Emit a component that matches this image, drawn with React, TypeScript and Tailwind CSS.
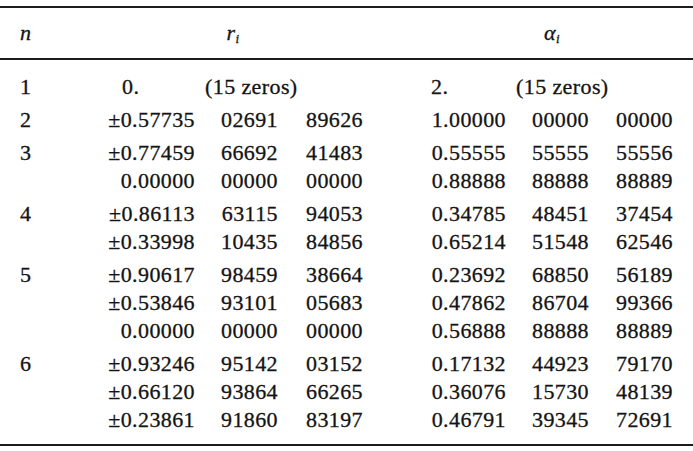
const groups: { n: string; rows: string[][] }[] = [
  { n: "2", rows: [["±0.57735", "02691", "89626", "1.00000", "00000", "00000"]] },
  {
    n: "3",
    rows: [
      ["±0.77459", "66692", "41483", "0.55555", "55555", "55556"],
      ["0.00000", "00000", "00000", "0.88888", "88888", "88889"],
    ],
  },
  {
    n: "4",
    rows: [
      ["±0.86113", "63115", "94053", "0.34785", "48451", "37454"],
      ["±0.33998", "10435", "84856", "0.65214", "51548", "62546"],
    ],
  },
  {
    n: "5",
    rows: [
      ["±0.90617", "98459", "38664", "0.23692", "68850", "56189"],
      ["±0.53846", "93101", "05683", "0.47862", "86704", "99366"],
      ["0.00000", "00000", "00000", "0.56888", "88888", "88889"],
    ],
  },
  {
    n: "6",
    rows: [
      ["±0.93246", "95142", "03152", "0.17132", "44923", "79170"],
      ["±0.66120", "93864", "66265", "0.36076", "15730", "48139"],
      ["±0.23861", "91860", "83197", "0.46791", "39345", "72691"],
    ],
  },
];

const cols = "grid grid-cols-[103px_92px_83px_85px_143px_83px_84px]";

function Rule() {
  return <div className="h-[2px] w-full bg-[#1c1c1c]" />;
}

export default function App() {
  return (
    <div
      className="w-[693px] h-[451px] bg-white text-[#141414] text-[22px] tracking-[0.4px] [-webkit-text-stroke:0.3px_#141414] overflow-hidden pt-[6px]"
      style={{ fontFamily: '"Liberation Serif", "Times New Roman", serif' }}
    >
      <Rule />

      {/* Header */}
      <div className={`${cols} h-[50px] items-center leading-none`}>
        <div className="pl-[20px] italic">n</div>
        <div className="col-span-3 text-center italic">
          r<sub className="text-[13px] italic">i</sub>
        </div>
        <div className="col-span-3 pl-[68px] text-center italic">
          α<sub className="text-[13px] italic">i</sub>
        </div>
      </div>

      <Rule />

      {/* Body */}
      <div className="pt-[13px] pb-[10px] leading-[28px]">
        <div className={cols}>
          <div className="pl-[20px]">1</div>
          <div className="pl-[19px]">0.</div>
          <div className="col-span-2 pl-[10px]">(15 zeros)</div>
          <div className="pl-[68px]">2.</div>
          <div className="col-span-2 pl-[10px]">(15 zeros)</div>
        </div>

        {groups.map((g) => (
          <div key={g.n} className="pt-[5px]">
            {g.rows.map((r, i) => (
              <div key={i} className={`${cols} text-right`}>
                <div className="pl-[20px] text-left">{i === 0 ? g.n : ""}</div>
                {r.map((v, j) => (
                  <div key={j}>{v}</div>
                ))}
              </div>
            ))}
          </div>
        ))}
      </div>

      <Rule />
    </div>
  );
}
